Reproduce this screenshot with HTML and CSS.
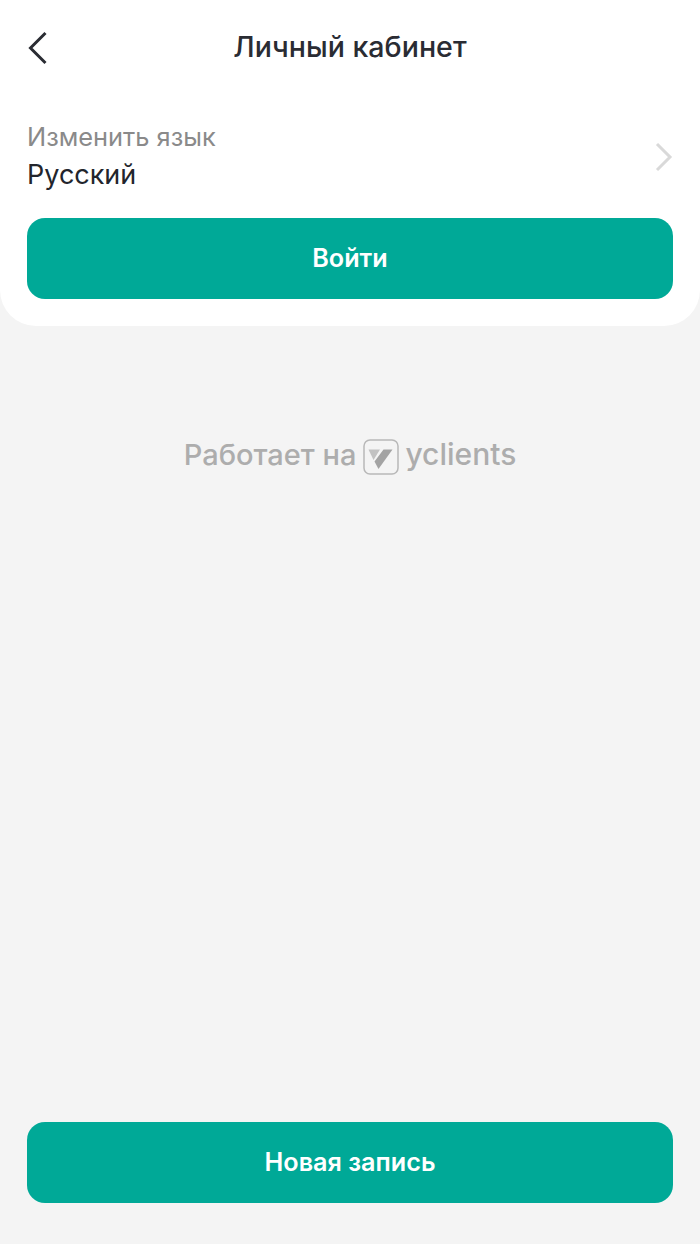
FILE: index.html
```html
<!DOCTYPE html>
<html>
<head>
    <meta charset="utf-8">
    <link rel="stylesheet" href="styles.css">
</head>
<body>
    <div class="page">
        <div class="card">
            <div class="header">
                <svg class="back" width="20" height="34" viewBox="0 0 20 34">
                    <path d="M17.5 2 L2.5 17 L17.5 32" fill="none" stroke="#2a2c33" stroke-width="3"/>
                </svg>
                <h1>Личный кабинет</h1>
            </div>
            <div class="lang-row">
                <div>
                    <div class="lang-label">Изменить язык</div>
                    <div class="lang-value">Русский</div>
                </div>
                <svg class="chevron" width="18" height="30" viewBox="0 0 18 30">
                    <path d="M2 2 L15 15 L2 28" fill="none" stroke="#d9d9d9" stroke-width="3"/>
                </svg>
            </div>
            <button class="btn">Войти</button>
        </div>

        <div class="powered">
            <span class="powered-text">Работает на</span>
            <svg class="logo" width="36" height="36" viewBox="0 0 36 36">
                <rect x="1" y="1" width="34" height="34" rx="6" fill="none" stroke="#b8b8b8" stroke-width="1.5"/>
                <path d="M5.5 10.5 H17 L10.5 21 Z" fill="#c2c2c2"/>
                <path d="M20.5 10.5 H29.5 L15.5 30 L11.5 22.5 Z" fill="#a3a3a3"/>
            </svg>
            <span class="brand">yclients</span>
        </div>

        <div class="footer">
            <button class="btn">Новая запись</button>
        </div>
    </div>
</body>
</html>
```

FILE: styles.css
```css
body {
    margin: 0;
    background-color: #f4f4f4;
    font-family: Inter, "Noto Sans", sans-serif;
}
.page {
    display: flex;
    flex-direction: column;
    height: 1244px;
}
.card {
    background: white;
    height: 326px;
    box-sizing: border-box;
    padding: 0 27px;
    border-radius: 0 0 36px 36px;
}
.header {
    position: relative;
    height: 93px;
    display: flex;
    align-items: center;
    justify-content: center;
}
.back {
    position: absolute;
    left: 1px;
    top: 31px;
}
h1 {
    margin: 0;
    font-size: 28.6px;
    font-weight: 500;
    color: #2a2c33;
}
.lang-row {
    display: flex;
    align-items: center;
    justify-content: space-between;
    height: 125px;
}
.chevron {
    margin-top: 2px;
}
.lang-label {
    font-size: 25.4px;
    line-height: 38px;
    color: #8a8a8a;
}
.lang-value {
    font-size: 27px;
    line-height: 38px;
    color: #22252c;
}
.btn {
    display: block;
    width: 100%;
    height: 81px;
    background: #00a997;
    color: white;
    border: none;
    border-radius: 18px;
    font-family: inherit;
    font-size: 25.2px;
    font-weight: 600;
    padding: 0 0 2px;
}
.powered {
    margin-top: 113px;
    display: flex;
    align-items: center;
    justify-content: center;
    height: 36px;
    font-weight: 500;
    color: #adadad;
}
.powered-text {
    font-size: 29px;
    margin: 0 7px 5px 0;
}
.brand {
    font-size: 30px;
    margin: 0 0 6px 6px;
}
.footer {
    margin-top: auto;
    padding: 0 27px 41px;
}
```
